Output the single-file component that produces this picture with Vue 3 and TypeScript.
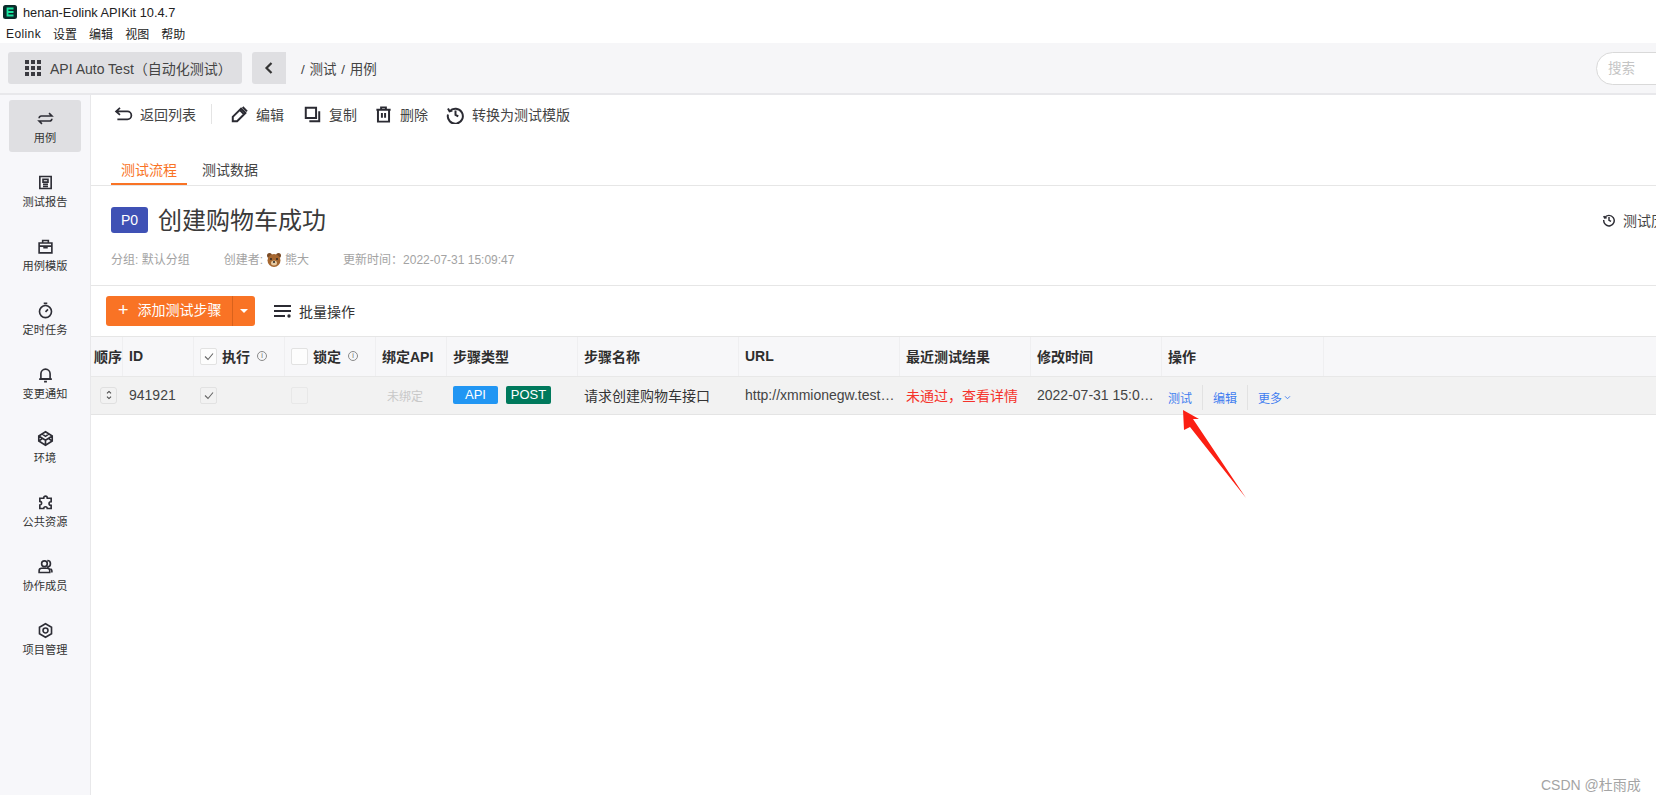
<script setup lang="ts">
const menus: string[] = ['Eolink', '设置', '编辑', '视图', '帮助']
const nav: { label: string; d: string; active?: boolean }[] = [
  { label: '用例', active: true, d: 'M3 11.500a3 3 0 0 1 3-3h15l-4-4M21 12.500a3 3 0 0 1-3 3H3l4 4' },
  { label: '测试报告', d: 'M4 3.500h16v17H4zM8.500 7.500h7v4h-7zM8.500 14.500h7M8.500 17.500h7' },
  { label: '用例模版', d: 'M3 7h18v14H3zM8 7V3.500h8V7M3 11.500h18M10 11.500v2h4v-2' },
  { label: '定时任务', d: 'M12 22a8.500 8.500 0 1 0 0-17 8.500 8.500 0 0 0 0 17zM9.500 2h5M12 14l3.500-3.500' },
  { label: '变更通知', d: 'M5.500 18v-7a6.500 6.500 0 0 1 13 0v7zM3 18.500h18M10 22h4' },
  { label: '环境', d: 'M12 2.500l9.500 6v7l-9.500 6-9.500-6v-7zM2.500 8.500l9.500 6 9.500-6M12 14.500v7M7 5.500l5 3.500 5-3.500M2.500 15.500L7 12.500M21.500 15.500L17 12.500' },
  { label: '公共资源', d: 'M9.500 5.500a2.500 2.500 0 0 1 5 0V6H20v5h-.5a2.500 2.500 0 0 0 0 5h.5v4.500h-5.500a2.500 2.500 0 0 0-5 0H4v-5a2.500 2.500 0 0 0 0-5V6h5.500z' },
  { label: '协作成员', d: 'M10.500 12a4 4 0 1 0 0-8 4 4 0 0 0 0 8zM3 20.500V18a3.500 3.500 0 0 1 3.500-3.500h8A3.500 3.500 0 0 1 18 18v2.500zM14.500 3.500a4.500 4.500 0 0 1 0 9M21 20.500V18a3.500 3.500 0 0 0-2-3' },
  { label: '项目管理', d: 'M12 2.500l8.500 4.800v9.400L12 21.500l-8.500-4.800V7.300zM12 15.500a3.500 3.500 0 1 0 0-7 3.500 3.500 0 0 0 0 7z' },
]
const tools: { label: string; cls: string; d: string }[] = [
  { label: '编辑', cls: 'edit', d: 'M3.500 20.500v-5.500L14 4.500l5.500 5.500L9 20.500zM12.500 6.500l5 5M16 2.500l5.500 5.500' },
  { label: '复制', cls: 'copy', d: 'M3.500 3.500h13v13h-13zM8 20.500h12.500V8' },
  { label: '删除', cls: 'del', d: 'M3 6h18M9 6V3h6v3M5 6v15h14V6M10 10v6M14 10v6' },
  { label: '转换为测试模版', cls: 'conv', d: 'M4.500 8A9.500 9.500 0 1 1 2.500 12M2.500 4.500l2 3.500L8 7M12 7v5.500l3.500 2' },
]
const heads: string[] = ['绑定API', '步骤类型', '步骤名称', 'URL', '最近测试结果', '修改时间', '操作']
</script>

<template>
  <div class="root">
    <div class="titlebar">
      <svg class="logo" viewBox="0 0 14 14"><rect width="14" height="14" rx="2.500" fill="#0c2b2b" /><path d="M10.500 3.500H4.500v7h6M4.500 7h6" stroke="#19e6a0" stroke-width="1.800" fill="none" /></svg>
      <span>henan-Eolink APIKit 10.4.7</span>
    </div>
    <div class="menubar"><span v-for="m in menus" :key="m">{{ m }}</span></div>
    <div class="topbar">
      <div class="project">
        <svg class="grid-ic" viewBox="0 0 16 16"><g fill="#3a3a40"><rect v-for="n in 9" :key="n" :x="(n - 1) % 3 * 6" :y="Math.floor((n - 1) / 3) * 6" width="4" height="4" /></g></svg>
        <span>API Auto Test（自动化测试）</span>
      </div>
      <div class="back"><svg viewBox="0 0 10 14" width="10" height="14"><path d="M7.500 2L2.500 7l5 5" fill="none" stroke="#333" stroke-width="2.200" /></svg></div>
      <div class="crumb">/&nbsp;测试&nbsp;/&nbsp;用例</div>
      <div class="search">搜索</div>
    </div>
    <div class="body">
      <aside class="side">
        <div v-for="n in nav" :key="n.label" class="nav" :class="{ active: n.active }">
          <svg viewBox="0 0 24 24" width="17" height="17"><path :d="n.d" fill="none" stroke="#2e2e36" stroke-width="2.300" /></svg>
          <span>{{ n.label }}</span>
        </div>
      </aside>
      <main class="main">
        <div class="toolbar">
          <div class="tool back-tool">
            <svg viewBox="0 0 24 24" width="21" height="21"><path d="M8 4.500L3.500 8.500l4.500 4M3.500 8.500h13a4.500 4.500 0 0 1 0 9H5" fill="none" stroke="#2b2b33" stroke-width="2" /></svg>
            <span>返回列表</span>
          </div>
          <i class="tsep"></i>
          <div v-for="t in tools" :key="t.label" class="tool" :class="t.cls">
            <svg viewBox="0 0 24 24" width="19" height="19"><path :d="t.d" fill="none" stroke="#2b2b33" stroke-width="2.500" /></svg>
            <span>{{ t.label }}</span>
          </div>
        </div>
        <div class="tabs">
          <span class="tab on">测试流程</span>
          <span class="tab">测试数据</span>
        </div>
        <section class="info">
          <div class="title-row">
            <span class="p0">P0</span>
            <h1>创建购物车成功</h1>
            <span class="history">
              <svg viewBox="0 0 24 24" width="14" height="14"><path d="M4.500 8A9 9 0 1 1 3 12M3 5l1.500 3.500L8 8M12 7v5.500l3.500 2" fill="none" stroke="#2b2b33" stroke-width="2.500" /></svg>
              测试历史
            </span>
          </div>
          <div class="meta">
            <span>分组: 默认分组</span>
            <span class="who">创建者: <svg viewBox="0 0 16 16" width="16" height="16"><circle cx="3.500" cy="3.500" r="2.500" fill="#7a4a24" /><circle cx="12.500" cy="3.500" r="2.500" fill="#7a4a24" /><circle cx="8" cy="8.500" r="6.500" fill="#a5662f" /><ellipse cx="8" cy="11" rx="3" ry="2.500" fill="#e6c9a0" /><circle cx="8" cy="10" r="1" fill="#222" /><circle cx="5" cy="7" r=".9" fill="#222" /><circle cx="11" cy="7" r=".9" fill="#222" /></svg> 熊大</span>
            <span>更新时间：2022-07-31 15:09:47</span>
          </div>
        </section>
        <div class="actions">
          <div class="add">
            <span class="add-main"><b class="plus">+</b>添加测试步骤</span>
            <span class="add-drop"><i></i></span>
          </div>
          <div class="batch">
            <svg viewBox="0 0 18 14" width="18" height="14"><path d="M0 2h17M0 7h17M0 12h11" stroke="#2b2b33" stroke-width="1.800" /><circle cx="15" cy="12" r="1.700" fill="#2b2b33" /></svg>
            <span>批量操作</span>
          </div>
        </div>
        <div class="table">
          <div class="row head">
            <div class="cell order">顺序</div>
            <div class="cell">ID</div>
            <div class="cell"><i class="check"><svg viewBox="0 0 12 12"><path d="M2 6.500l3 3 5-6" fill="none" stroke="#666" stroke-width="1.100" /></svg></i>执行<i class="tip">i</i></div>
            <div class="cell"><i class="check"></i>锁定<i class="tip">i</i></div>
            <div v-for="h in heads" :key="h" class="cell">{{ h }}</div>
            <div class="cell last"></div>
          </div>
          <div class="row data">
            <div class="cell order"><i class="spin"><svg viewBox="0 0 10 14" width="8" height="12"><path d="M2.500 5L5 2.500 7.500 5M2.500 9L5 11.500 7.500 9" fill="none" stroke="#444" stroke-width="1.300" /></svg></i></div>
            <div class="cell num">941921</div>
            <div class="cell"><i class="check"><svg viewBox="0 0 12 12"><path d="M2 6.500l3 3 5-6" fill="none" stroke="#666" stroke-width="1.100" /></svg></i></div>
            <div class="cell"><i class="check off"></i></div>
            <div class="cell unbound">未绑定</div>
            <div class="cell tags"><span class="tag api">API</span><span class="tag post">POST</span></div>
            <div class="cell">请求创建购物车接口</div>
            <div class="cell"><span class="ell">http://xmmionegw.test.com/cart/create</span></div>
            <div class="cell fail">未通过，查看详情</div>
            <div class="cell"><span class="ell">2022-07-31 15:09:47</span></div>
            <div class="cell ops">
              <a>测试</a><i></i><a>编辑</a><i></i><a>更多<svg viewBox="0 0 8 6" width="7" height="5"><path d="M1 1.500l3 3 3-3" fill="none" stroke="#3f7df0" stroke-width="1.100" /></svg></a>
            </div>
            <div class="cell last"></div>
          </div>
        </div>
      </main>
    </div>
    <svg class="arrow" viewBox="0 0 70 95" width="70" height="95"><polygon points="3,0 19,9 13,9 66,88 10,17 4,20" fill="#fb1f13" /></svg>
    <div class="mark">CSDN @杜雨成</div>
  </div>
</template>

<style>
html, body { margin: 0; background: #fff; overflow: hidden; }
</style>

<style scoped>
.root {
  position: relative;
  width: 1656px;
  height: 795px;
  overflow: hidden;
  display: flex;
  flex-direction: column;
  background: #fff;
  color: #333;
  font: 14px "Liberation Sans", "Noto Sans CJK SC", sans-serif;
}
i { font-style: normal; }
.titlebar {
  height: 24px;
  display: flex;
  align-items: center;
  gap: 6px;
  padding-left: 3px;
  font-size: 12.800px;
  color: #222;
  flex: none;
}
.logo { width: 14px; height: 14px; }
.menubar {
  height: 19px;
  display: flex;
  align-items: center;
  gap: 12px;
  padding-left: 6px;
  font-size: 12px;
  color: #222;
  flex: none;
}
.menubar span:first-child { letter-spacing: .4px; }
.topbar {
  height: 50px;
  flex: none;
  display: flex;
  align-items: center;
  background: #f6f6f8;
  border-bottom: 2px solid #e8e8eb;
  padding-left: 8px;
}
.project {
  width: 234px;
  height: 32px;
  box-sizing: border-box;
  padding-left: 17px;
  display: flex;
  align-items: center;
  gap: 9px;
  background: #dfdfe2;
  border-radius: 3px;
  color: #444;
  font-size: 14px;
}
.grid-ic { width: 16px; height: 16px; }
.back {
  width: 34px;
  height: 32px;
  margin-left: 10px;
  background: #dfdfe2;
  border-radius: 3px 0 0 3px;
  display: flex;
  align-items: center;
  justify-content: center;
}
.crumb {
  margin-left: 15px;
  font-size: 13.500px;
  color: #444;
  word-spacing: 1px;
}
.search {
  margin-left: auto;
  width: 100px;
  height: 33px;
  margin-right: -40px;
  box-sizing: border-box;
  padding-left: 11px;
  line-height: 31px;
  font-size: 13.500px;
  color: #c4c4c4;
  background: #fff;
  border: 1px solid #d9d9d9;
  border-radius: 17px;
}
.body { flex: 1; display: flex; min-height: 0; }
.side {
  width: 91px;
  box-sizing: border-box;
  flex: none;
  background: #f7f7fa;
  border-right: 1px solid #e8e8ea;
  padding: 5px 9px 0;
}
.nav {
  width: 72px;
  height: 52px;
  margin-bottom: 12px;
  box-sizing: border-box;
  padding-top: 10px;
  border-radius: 3px;
  display: flex;
  flex-direction: column;
  align-items: center;
  gap: 4px;
  font-size: 11.200px;
  line-height: 14px;
  color: #333;
}
.nav.active { background: #dfdfe2; }
.main { flex: 1; min-width: 0; }
.toolbar {
  height: 38px;
  padding-bottom: 2px;
  display: flex;
  align-items: center;
  padding-left: 23px;
  color: #444;
}
.tool { display: flex; align-items: center; gap: 7px; margin-right: 20px; }
.tool svg { margin-left: -1px; }
.tool.back-tool { gap: 6px; }
.tool.copy { margin-right: 18px; }
.tool.del { margin-right: 19px; }
.tsep { width: 1px; height: 20px; background: #e4e4e4; margin: 0 19px 0 -5px; }
.tabs {
  margin-top: 21px;
  height: 29px;
  display: flex;
  gap: 5px;
  padding-left: 20px;
  border-bottom: 1px solid #e6e6e6;
}
.tab {
  padding: 0 10px;
  height: 29px;
  line-height: 28px;
  color: #444;
  box-sizing: border-box;
}
.tab.on { color: #f97325; border-bottom: 2px solid #f97325; }
.info {
  height: 100px;
  box-sizing: border-box;
  padding: 21px 0 0 20px;
  border-bottom: 1px solid #e6e6e6;
}
.title-row { display: flex; align-items: center; height: 26px; }
.p0 {
  width: 37px;
  height: 26px;
  line-height: 26px;
  text-align: center;
  background: #3f51b5;
  color: #fff;
  border-radius: 3px;
  font-size: 14px;
}
h1 {
  margin: 2px 0 0 10px;
  font-size: 24px;
  font-weight: 400;
  color: #3a3a3a;
  line-height: 26px;
}
.history {
  margin: -1px -34px 0 auto;
  display: flex;
  align-items: center;
  gap: 7px;
  width: 88px;
  flex: none;
  white-space: nowrap;
  font-size: 14px;
  color: #444;
}
.meta {
  margin-top: 17px;
  display: flex;
  gap: 34px;
  font-size: 12px;
  color: #a3a3a3;
  line-height: 20px;
}
.who { display: flex; align-items: center; gap: 3px; }
.actions {
  height: 50px;
  display: flex;
  align-items: center;
  padding-left: 15px;
}
.add {
  display: flex;
  height: 30px;
  width: 149px;
  background: #f97325;
  border-radius: 3px;
  color: #fff;
}
.add-main {
  width: 127px;
  box-sizing: border-box;
  padding-left: 12px;
  line-height: 29px;
  border-right: 1px solid #d9621c;
  white-space: nowrap;
}
.plus { font-weight: 400; font-size: 18px; margin-right: 9px; vertical-align: -1px; }
.add-drop { flex: 1; display: flex; align-items: center; justify-content: center; }
.add-drop i {
  width: 0;
  height: 0;
  border-left: 4px solid transparent;
  border-right: 4px solid transparent;
  border-top: 4px solid #fff;
}
.batch {
  margin-left: 19px;
  padding-bottom: 1px;
  display: flex;
  align-items: center;
  gap: 7px;
  color: #333;
}
.table { border-top: 1px solid #e6e6e6; }
.row {
  display: grid;
  grid-template-columns: 32px 71px 91px 91px 71px 131px 161px 161px 131px 131px 162px 1fr;
}
.head { height: 39px; background: #f7f7f9; border-bottom: 1px solid #e8e8e8; font-weight: 600; }
.data { height: 37px; background: #f2f2f2; border-bottom: 1px solid #e4e4e4; }
.cell {
  box-sizing: border-box;
  display: flex;
  align-items: center;
  padding-left: 6px;
  padding-bottom: 1px;
  min-width: 0;
  white-space: nowrap;
  overflow: hidden;
}
.head .cell { border-right: 1px solid #efeff1; color: #2e2e2e; }
.head .last { border-right: 0; }
.head .order { overflow: visible; padding-left: 3px; }
.data .order { padding-left: 9px; }
.check {
  width: 17px;
  height: 17px;
  box-sizing: border-box;
  border: 1px solid #e2e2e2;
  border-radius: 2px;
  margin-right: 5px;
  background: #fdfdfd;
  flex: none;
  display: flex;
  align-items: center;
  justify-content: center;
}
.check svg { width: 12px; height: 12px; }
.data .check { background: #f2f2f2; }
.check.off { border-color: #e8e8e8; }
.tip {
  width: 10px;
  height: 10px;
  box-sizing: border-box;
  border: 1px solid #8a8a8a;
  border-radius: 50%;
  margin-left: 7px;
  font-size: 7px;
  line-height: 8px;
  text-align: center;
  color: #666;
  font-weight: 400;
}
.spin {
  width: 17px;
  height: 17px;
  box-sizing: border-box;
  border: 1px solid #e0e0e0;
  border-radius: 3px;
  display: flex;
  align-items: center;
  justify-content: center;
}
.num { color: #444; font-size: 14px; }
.unbound { font-size: 12px; color: #c8c8c8; padding-left: 11px; }
.tags { gap: 8px; }
.tag {
  width: 45px;
  height: 18px;
  line-height: 18px;
  text-align: center;
  color: #fff;
  font-size: 13px;
  border-radius: 2px;
}
.api { background: #2196f3; }
.post { background: #00795c; }
.ell { display: block; width: 100%; padding-right: 3px; box-sizing: border-box; overflow: hidden; text-overflow: ellipsis; color: #444; }
.fail { color: #f5322b; }
.ops { font-size: 12px; color: #3f7df0; padding-top: 3px; padding-bottom: 0; overflow: visible; }
.ops i { width: 1px; height: 25px; margin: 0 10px; background: #e2e2e2; }
.ops a { display: flex; align-items: center; gap: 2px; }
.arrow { position: absolute; left: 1180px; top: 410px; }
.mark {
  position: absolute;
  left: 1541px;
  top: 777px;
  font-size: 14px;
  line-height: 16px;
  color: #a4a4a4;
}
</style>
